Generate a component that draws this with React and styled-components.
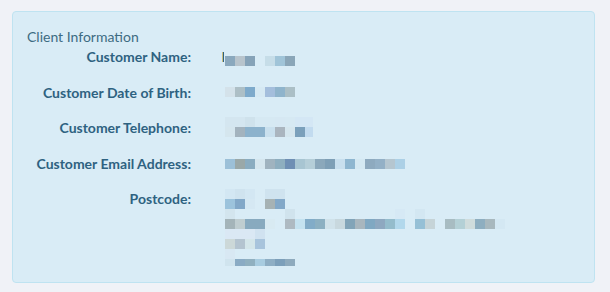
import styled, { createGlobalStyle } from "styled-components";

const GlobalStyle = createGlobalStyle`
  html, body {
    margin: 0;
    background: #f0f2f7;
    font-family: Lato, "Open Sans", "Liberation Sans", sans-serif;
  }
`;

const Page = styled.div`
  padding: 11px 0 0 12px;
`;

const Panel = styled.section`
  box-sizing: border-box;
  width: 583px;
  height: 272px;
  padding: 16px 14px;
  background: #d9ecf6;
  border: 1px solid #bfe3f1;
  border-radius: 4px;
`;

const Title = styled.h3`
  margin: 0;
  font-size: 14px;
  font-weight: 400;
  line-height: 17px;
  color: #3d6b82;
`;

const Fields = styled.dl`
  display: grid;
  grid-template-columns: 164px 1fr;
  column-gap: 31px;
  row-gap: 17.75px;
  margin: 3px 0 0;
`;

const Label = styled.dt`
  text-align: right;
  font-size: 14px;
  font-weight: 700;
  line-height: 17px;
  color: #2e6281;
`;

const Value = styled.dd`
  display: flex;
  align-items: flex-start;
  margin: 0;
  min-height: 17px;
`;

const Initial = styled.span`
  flex: none;
  width: 1px;
  height: 10px;
  margin-top: 4px;
  border-left: 1px solid #cbbd80;
  background: #2e6281;
`;

const Mosaic = styled.div`
  display: flex;
  flex-direction: column;
  margin-top: ${(p) => p.$top}px;
  margin-left: ${(p) => p.$left}px;
`;

const MosaicRow = styled.div`
  display: flex;
  height: ${(p) => p.$h}px;
`;

const Cell = styled.span`
  flex: none;
  width: ${(p) => p.$w}px;
  height: 100%;
  background: ${(p) => p.$c || "transparent"};
`;

const F = "#d6e9f3";

const fields = [
  {
    label: "Customer Name:",
    initial: true,
    top: 8,
    rows: [
      { h: 10, cells: ["#8aa8bd", "#b8c4cc", "#86a3b8", null, "#c6dde8", "#a0c4d8", "#8aa6b8"] },
    ],
  },
  {
    label: "Customer Date of Birth:",
    top: 3.25,
    rows: [
      { h: 10, cells: ["#d4e2ea", "#adbfc6", "#7eaacb", F, "#a4bedc", "#8fb4cc", "#abbfc6"] },
    ],
  },
  {
    label: "Customer Telephone:",
    top: -1.5,
    rows: [
      { h: 10, cells: ["#d4e6f0", "#d4e6f0", "#cfe2ec", F, F, "#d6e8f3", F, "#d4e7f5", ["#d4e7f5", 8]] },
      { h: 10, cells: ["#d5e6ee", "#a3b3be", "#8cb2cc", "#8cb2cc", "#c9e0ee", "#aab5bf", "#d5e6ee", "#7ba0bb", ["#c2dbef", 8]] },
    ],
  },
  {
    label: "Customer Email Address:",
    top: 3.75,
    rows: [
      {
        h: 10,
        cells: [
          "#9cc0d8", "#9aa8a8", "#8aacc0", "#d5e6ee", "#a0b3bf", "#8eaebf",
          "#6f8fb4", "#a8c5d2", "#b5ced8", "#8ba8bb", "#7e9fb6", "#c8dfee",
          "#8eb6d0", "#d4e8f2", "#8eaabf", "#93b0c6", "#b5c6d0", "#acd0e6",
        ],
      },
    ],
  },
  {
    label: "Postcode:",
    top: -1,
    rows: [
      { h: 10, cells: ["#d3e7f3", "#cfe3ef", "#d3e7f3", null, "#cfe3ef", "#cfe3ef"] },
      { h: 10, cells: ["#9cc3dc", "#82a8c8", "#d5e8f3", null, "#a6b2b4", "#82a8c8"] },
      {
        h: 10,
        cells: [
          "#d3e5ee", null, null, null, null, null, "#d0e3ed", null, null, null,
          null, null, null, null, null, null, null, "#d6e9f5", null, "#d3e7f2",
        ],
      },
      {
        h: 10,
        cells: [
          "#a4b4b9", "#bfcdd0", "#88aabf", "#88aabf", "#d8eaf2", null, "#aebac2",
          "#c4e2f0", "#82acc8", "#8cb0c2", "#d0e2ea", "#c8d8de", "#82a4b8",
          "#a8b6be", "#80a8c2", "#8ea8c0", "#94bccc", "#b2d8ec", null, "#96c0d6",
          "#c6d4d8", null, "#a8bcc2", "#b4d0d6", "#d0dcdc", "#8eaec0", "#a8b8be",
          "#d4e8f3",
        ],
      },
      { h: 10, cells: ["#dae8f4", "#dae8f4", "#dae8f4", "#d0e2f0"] },
      { h: 10, cells: ["#ccd8d8", "#b4c4d0", "#d4e6ea", "#a8c4dc"] },
      { h: 10, cells: ["#d8e8f3"] },
      { h: 7, cells: ["#d0e4ee", "#8aabc4", "#90b0c0", "#a8cce0", "#8eaec4", "#7c9fba", "#8eaabd"] },
    ],
  },
];

function Blurred({ rows, top, left }) {
  return (
    <Mosaic $top={top} $left={left}>
      {rows.map((row, i) => (
        <MosaicRow key={i} $h={row.h}>
          {row.cells.map((cell, j) => {
            const [c, w] = Array.isArray(cell) ? cell : [cell, 10];
            return <Cell key={j} $c={c} $w={w} />;
          })}
        </MosaicRow>
      ))}
    </Mosaic>
  );
}

function Row({ field }) {
  return (
    <>
      <Label>{field.label}</Label>
      <Value>
        {field.initial && <Initial />}
        <Blurred rows={field.rows} top={field.top} left={field.initial ? 1 : 3} />
      </Value>
    </>
  );
}

export default function App() {
  return (
    <Page>
      <GlobalStyle />
      <Panel>
        <Title>Client Information</Title>
        <Fields>
          {fields.map((field) => (
            <Row key={field.label} field={field} />
          ))}
        </Fields>
      </Panel>
    </Page>
  );
}
